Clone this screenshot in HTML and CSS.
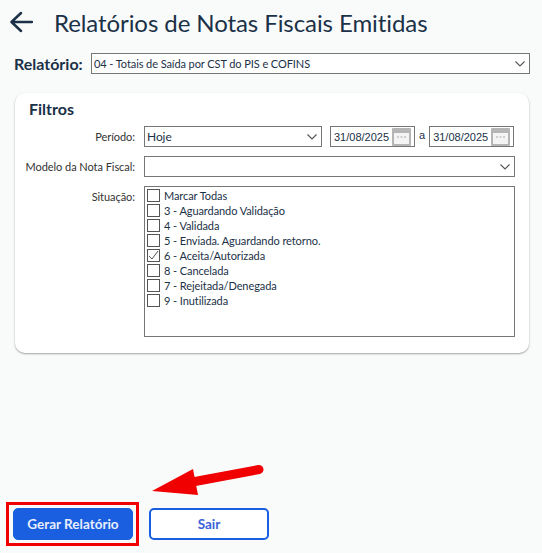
FILE: index.html
```html
<!DOCTYPE html>
<html lang="pt-BR">
<head>
  <meta charset="UTF-8">
  <meta name="viewport" content="width=device-width, initial-scale=1.0">
  <title>Relatórios de Notas Fiscais Emitidas</title>
  <link rel="stylesheet" href="styles.css">
</head>
<body>
  <div class="page">
    <div class="header">
      <svg class="back" width="24" height="22" viewBox="0 0 24 22"><path d="M23 11H3M12 2l-9.500 9 9.500 9" fill="none" stroke="#1b3147" stroke-width="2.500" stroke-linecap="round" stroke-linejoin="round"/></svg>
      <h1>Relatórios de Notas Fiscais Emitidas</h1>
    </div>

    <div class="report-row">
      <label class="report-label">Relatório:</label>
      <select class="field report-select">
        <option>04 - Totais de Saída por CST do PIS e COFINS</option>
      </select>
    </div>

    <div class="panel">
      <h2>Filtros</h2>

      <div class="row">
        <label class="row-label">Período:</label>
        <select class="field period-select"><option>Hoje</option></select>
        <div class="date">
          <span class="date-text">31/08/2025</span>
          <svg class="cal" width="19" height="18" viewBox="0 0 19 18"><rect width="19" height="18" rx="1" fill="#b5b5b5"/><rect x="2" y="5" width="15" height="11" fill="#f4f4f4"/><path d="M5 9h2M8.500 9h2M12 9h2" stroke="#a8a8a8" stroke-width="1"/></svg>
        </div>
        <span class="date-sep">a</span>
        <div class="date">
          <span class="date-text">31/08/2025</span>
          <svg class="cal" width="19" height="18" viewBox="0 0 19 18"><rect width="19" height="18" rx="1" fill="#b5b5b5"/><rect x="2" y="5" width="15" height="11" fill="#f4f4f4"/><path d="M5 9h2M8.500 9h2M12 9h2" stroke="#a8a8a8" stroke-width="1"/></svg>
        </div>
      </div>

      <div class="row">
        <label class="row-label">Modelo da Nota Fiscal:</label>
        <select class="field model-select"><option></option></select>
      </div>

      <div class="row row-top">
        <label class="row-label status-label">Situação:</label>
        <div class="status-list">
          <div class="status"><span class="box"></span>Marcar Todas</div>
          <div class="status"><span class="box"></span>3 - Aguardando Validação</div>
          <div class="status"><span class="box"></span>4 - Validada</div>
          <div class="status"><span class="box"></span>5 - Enviada. Aguardando retorno.</div>
          <div class="status"><span class="box"><svg width="11" height="11" viewBox="0 0 11 11"><path d="M1 6l3 3 6-8" fill="none" stroke="#555" stroke-width="1"/></svg></span>6 - Aceita/Autorizada</div>
          <div class="status"><span class="box"></span>8 - Cancelada</div>
          <div class="status"><span class="box"></span>7 - Rejeitada/Denegada</div>
          <div class="status"><span class="box"></span>9 - Inutilizada</div>
        </div>
      </div>
    </div>

    <div class="actions">
      <div class="highlight"><button class="btn btn-primary">Gerar Relatório</button></div>
      <button class="btn btn-outline">Sair</button>
    </div>

    <svg class="arrow" width="114" height="36" viewBox="0 0 114 36"><path d="M107 8.500L43 20.500" fill="none" stroke="#f00000" stroke-width="9" stroke-linecap="round"/><path d="M0 30L41 8l5 26z" fill="#f00000"/></svg>
  </div>
</body>
</html>
```

FILE: styles.css
```css
* {
  box-sizing: border-box;
}
html, body {
  margin: 0;
  height: 100%;
}
body {
  font-family: Lato, "Open Sans", sans-serif;
  background-color: #f9fbfb;
  color: #1b3147;
  overflow: hidden;
}
.page {
  position: relative;
  height: 553px;
  padding: 0 12px 0 0;
}
.header {
  display: flex;
  align-items: center;
  height: 44px;
  padding-left: 9px;
}
.back {
  flex: none;
}
h1 {
  margin: 0 0 0 21px;
  font-size: 24px;
  font-weight: 400;
  letter-spacing: -0.08px;
  white-space: nowrap;
}
.report-row {
  display: flex;
  align-items: center;
  height: 21px;
  margin-top: 9px;
  padding-left: 14px;
}
.report-label {
  width: 77px;
  font-size: 16px;
  font-weight: 700;
}
.field {
  height: 21px;
  border: 1px solid #767676;
  border-radius: 0;
  appearance: none;
  background-color: #fff;
  background-image: url("data:image/svg+xml,%3Csvg xmlns='http://www.w3.org/2000/svg' width='10' height='6'%3E%3Cpath d='M.5.5l4.500 4.500 4.500-4.500' fill='none' stroke='%23555' stroke-width='1.100'/%3E%3C/svg%3E");
  background-repeat: no-repeat;
  background-position: right 4px center;
  color: #1b3147;
  font-family: inherit;
  font-size: 11px;
  letter-spacing: -0.08px;
  padding: 0 0 0 2px;
}
.period-select {
  width: 178px;
  font-size: 12px;
}
.report-select {
  width: 439px;
}
.panel {
  width: 514px;
  height: 260px;
  margin: 19px 0 0 15px;
  padding: 7px 14px 0 0;
  background-color: #fff;
  border-radius: 10px;
  box-shadow: 0 1px 2px rgba(0,0,0,0.35);
}
h2 {
  margin: 0 0 8px 14px;
  font-size: 16px;
  font-weight: 700;
  line-height: 18px;
}
.row {
  display: flex;
  align-items: center;
  margin-bottom: 9px;
}
.row-top {
  align-items: flex-start;
}
.row-label {
  width: 120px;
  margin-right: 9px;
  flex: none;
  text-align: right;
  font-size: 11px;
  letter-spacing: -0.05px;
  color: #333;
  white-space: nowrap;
}
.status-label {
  margin-top: 4px;
}
.model-select {
  width: 371px;
}
.date {
  display: flex;
  align-items: center;
  justify-content: space-between;
  width: 85px;
  height: 21px;
  margin-left: 8px;
  padding: 0 3px 0 3px;
  border: 1px solid #767676;
  background-color: #fff;
}
.date-text {
  font-family: "Liberation Sans", Arial, sans-serif;
  font-size: 11px;
  color: #1b3147;
  white-space: nowrap;
}
.date + .date-sep + .date {
  margin-left: 4px;
}
.cal {
  flex: none;
}
.date-sep {
  margin: 0 0 3px 4px;
  font-family: "Liberation Sans", Arial, sans-serif;
  font-size: 11px;
}
.status-list {
  width: 371px;
  height: 151px;
  padding: 1px 2px;
  border: 1px solid #767676;
  background-color: #fff;
}
.status {
  display: flex;
  align-items: center;
  height: 15px;
  font-size: 11px;
  letter-spacing: -0.08px;
  white-space: nowrap;
}
.box {
  display: flex;
  align-items: center;
  justify-content: center;
  width: 13px;
  height: 13px;
  margin-right: 4px;
  border: 1px solid #555;
  background-color: #fff;
}
.actions {
  position: absolute;
  left: 6px;
  top: 502px;
  display: flex;
  align-items: center;
}
.highlight {
  padding: 3px 3px 3px 4px;
  border: 3px solid #f00000;
}
.btn {
  display: block;
  width: 120px;
  height: 32px;
  border-radius: 5px;
  font-family: inherit;
  font-size: 13.5px;
  font-weight: 700;
}
.btn-primary {
  background-color: #1a5fe0;
  border: 1px solid #1a5fe0;
  color: #e8eefc;
}
.btn-outline {
  margin-left: 10px;
  background-color: #fff;
  border: 2px solid #1a5fe0;
  color: #3a62d8;
}
.arrow {
  position: absolute;
  left: 152px;
  top: 461px;
}
```
